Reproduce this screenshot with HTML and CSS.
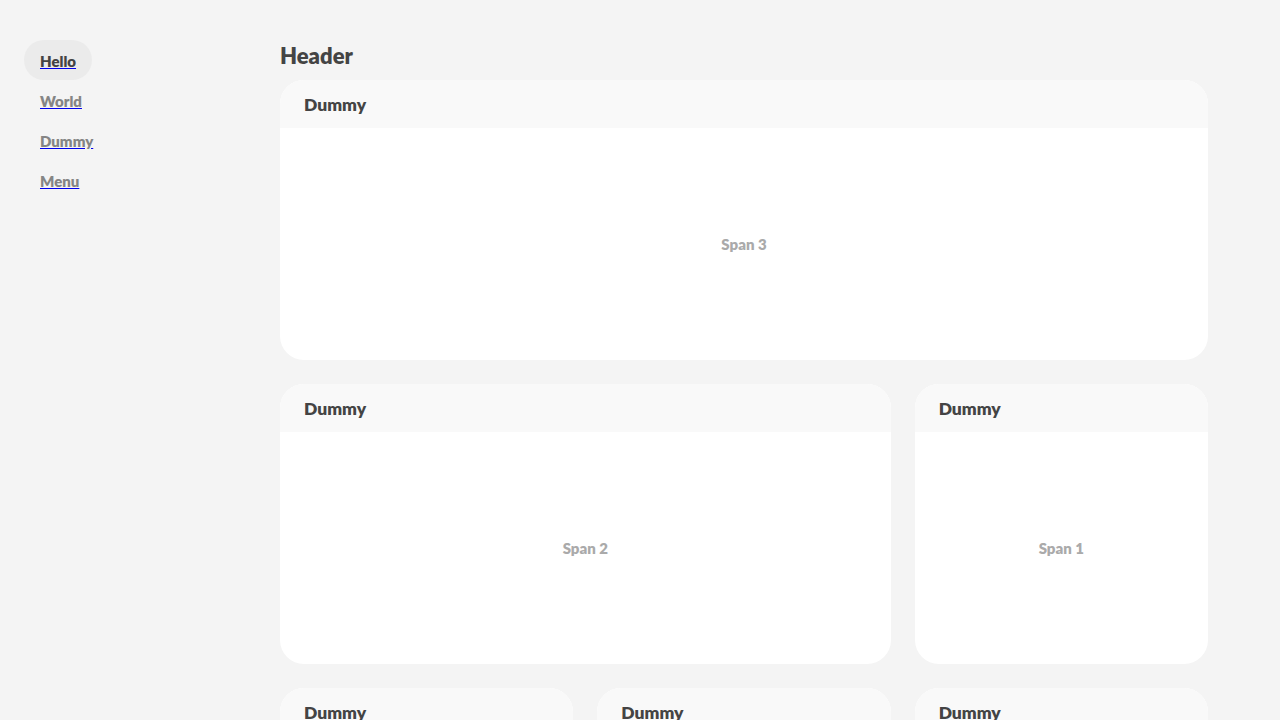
FILE: index.html
```html
<!DOCTYPE html>
<html>
<head>
<meta charset="utf-8">
<link rel="stylesheet" href="styles.css">
</head>
<body>
<div class="layout">
  <nav class="sidebar">
    <a href="#" class="nav-item active"><span class="nav-label">Hello</span></a>
    <a href="#" class="nav-item"><span class="nav-label">World</span></a>
    <a href="#" class="nav-item"><span class="nav-label">Dummy</span></a>
    <a href="#" class="nav-item"><span class="nav-label">Menu</span></a>
  </nav>
  <main class="main">
    <h2 class="page-title">Header</h2>
    <div class="grid">
      <section class="card span-3">
        <div class="card-head">Dummy</div>
        <div class="card-body">Span 3</div>
      </section>
      <section class="card span-2">
        <div class="card-head">Dummy</div>
        <div class="card-body">Span 2</div>
      </section>
      <section class="card span-1">
        <div class="card-head">Dummy</div>
        <div class="card-body">Span 1</div>
      </section>
      <section class="card span-1">
        <div class="card-head">Dummy</div>
        <div class="card-body">Span 1</div>
      </section>
      <section class="card span-1">
        <div class="card-head">Dummy</div>
        <div class="card-body">Span 1</div>
      </section>
      <section class="card span-1">
        <div class="card-head">Dummy</div>
        <div class="card-body">Span 1</div>
      </section>
    </div>
  </main>
</div>
</body>
</html>
```
FILE: styles.css
```css
html, body {
  margin: 0;
  padding: 0;
  background: #f4f4f4;
  font-family: "Lato", "Open Sans", sans-serif;
}
.layout {
  display: grid;
  grid-template-columns: 256px 1fr;
  min-height: 720px;
}
.sidebar {
  display: flex;
  flex-direction: column;
  align-items: flex-start;
  padding: 40px 24px;
}
.nav-item {
  display: block;
  height: 40px;
  line-height: 42px;
  padding: 0 16px;
  border-radius: 20px;
  font-size: 15px;
  font-weight: 800;
  color: #0000ee;
  text-decoration: underline;
}
.nav-label {
  color: #858585;
}
.nav-item.active {
  background: #ebebeb;
}
.nav-item.active .nav-label {
  color: #444444;
}
.main {
  padding: 40px 72px 24px 24px;
}
.page-title {
  margin: 0 0 8px 0;
  height: 32px;
  line-height: 32px;
  font-size: 22px;
  font-weight: 800;
  color: #444444;
}
.grid {
  display: grid;
  grid-template-columns: repeat(3, 1fr);
  gap: 24px;
}
.card {
  height: 280px;
  border-radius: 24px;
  background: #ffffff;
  overflow: hidden;
  display: flex;
  flex-direction: column;
}
.span-3 { grid-column: span 3; }
.span-2 { grid-column: span 2; }
.span-1 { grid-column: span 1; }
.card-head {
  height: 48px;
  line-height: 50px;
  padding: 0 24px;
  background: #f9f9f9;
  font-size: 17.5px;
  font-weight: 800;
  color: #444444;
}
.card-body {
  flex: 1;
  display: flex;
  align-items: center;
  justify-content: center;
  font-size: 15px;
  font-weight: 800;
  color: #aaaaaa;
}
```
